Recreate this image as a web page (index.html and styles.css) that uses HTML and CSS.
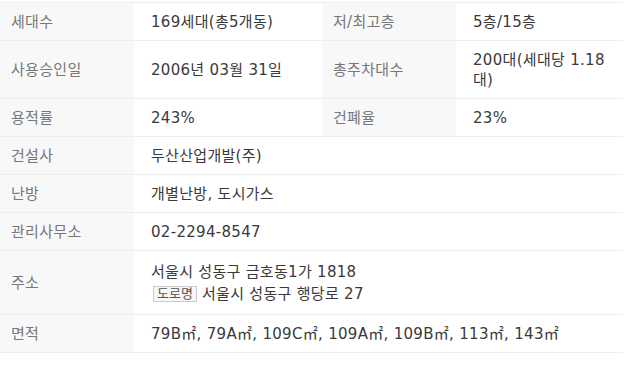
FILE: index.html
```html
<!DOCTYPE html>
<html lang="ko">
<head>
<meta charset="utf-8">
<link rel="stylesheet" href="styles.css">
</head>
<body>
<table class="info">
  <colgroup>
    <col class="c-th"><col class="c-td1"><col class="c-th"><col class="c-td2">
  </colgroup>
  <tbody>
    <tr>
      <th>세대수</th><td>169세대(총5개동)</td>
      <th>저/최고층</th><td>5층/15층</td>
    </tr>
    <tr class="tall">
      <th>사용승인일</th><td>2006년 03월 31일</td>
      <th>총주차대수</th><td>200대(세대당 1.18대)</td>
    </tr>
    <tr>
      <th>용적률</th><td>243%</td>
      <th>건폐율</th><td>23%</td>
    </tr>
    <tr>
      <th>건설사</th><td colspan="3">두산산업개발(주)</td>
    </tr>
    <tr>
      <th>난방</th><td colspan="3">개별난방, 도시가스</td>
    </tr>
    <tr>
      <th>관리사무소</th><td colspan="3">02-2294-8547</td>
    </tr>
    <tr class="addr">
      <th>주소</th>
      <td colspan="3">
        <div class="line">서울시 성동구 금호동1가 1818</div>
        <div class="line"><span class="badge">도로명</span> 서울시 성동구 행당로 27</div>
      </td>
    </tr>
    <tr>
      <th>면적</th><td colspan="3">79B㎡, 79A㎡, 109C㎡, 109A㎡, 109B㎡, 113㎡, 143㎡</td>
    </tr>
  </tbody>
</table>
</body>
</html>
```
FILE: styles.css
```css
html, body {
  margin: 0;
  padding: 0;
  background: #fff;
}
body {
  padding-top: 2px;
  font-family: "DejaVu Sans", "Noto Sans CJK KR", sans-serif;
  font-size: 15px;
  letter-spacing: 0.3px;
  color: #333;
}
.info {
  width: 623px;
  border-collapse: collapse;
  table-layout: fixed;
  border-top: 1px solid #eee;
}
.c-th { width: 134px; }
.c-td1 { width: 188px; }
.c-td2 { width: 167px; }
.info th,
.info td {
  border-bottom: 1px solid #eee;
  height: 37px;
  padding: 0;
  text-align: left;
  vertical-align: middle;
  line-height: 20px;
  font-weight: normal;
}
.info th {
  background: #f8f8f8;
  color: #777;
  padding-left: 11px;
}
.info td {
  padding-left: 17px;
  padding-right: 10px;
  color: #3a3a3a;
}
.info tr.tall th,
.info tr.tall td {
  height: 57px;
}
.info tr.addr th,
.info tr.addr td {
  height: 63px;
}
.line {
  line-height: 22px;
}
.badge {
  display: inline-block;
  margin-left: 2px;
  border: 1px solid #ccc;
  background: #f7f7f7;
  color: #555;
  font-size: 13px;
  letter-spacing: 0;
  line-height: 14px;
  padding: 0 3px;
  vertical-align: 1px;
}
```
